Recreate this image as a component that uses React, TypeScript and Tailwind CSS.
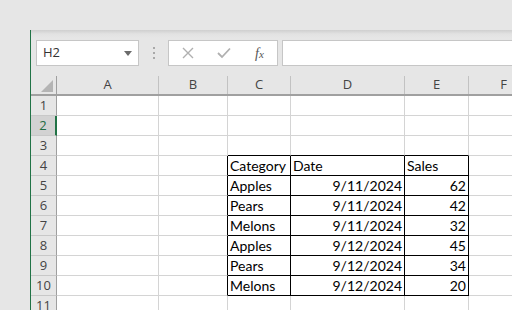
import React from "react";

type Col = { k: string; w: string };

const cols: Col[] = [
  { k: "A", w: "w-[102px]" },
  { k: "B", w: "w-[69px]" },
  { k: "C", w: "w-[63px]" },
  { k: "D", w: "w-[114px]" },
  { k: "E", w: "w-[64px]" },
  { k: "F", w: "w-[70px]" },
];

const data: Record<number, [string, string, string]> = {
  4: ["Category", "Date", "Sales"],
  5: ["Apples", "9/11/2024", "62"],
  6: ["Pears", "9/11/2024", "42"],
  7: ["Melons", "9/11/2024", "32"],
  8: ["Apples", "9/12/2024", "45"],
  9: ["Pears", "9/12/2024", "34"],
  10: ["Melons", "9/12/2024", "20"],
};

function Cell({ r, c }: { r: number; c: Col }) {
  const inTable = ["C", "D", "E"].includes(c.k);
  const rightBlack = (inTable || c.k === "B") && r >= 4 && r <= 10;
  const bottomBlack = inTable && r >= 3 && r <= 10;
  const rc = rightBlack ? "border-r-black" : "border-r-[#d4d4d4]";
  const bc = bottomBlack ? "border-b-black" : "border-b-[#d4d4d4]";
  let text = "";
  let right = false;
  if (data[r] && inTable) {
    const idx = c.k === "C" ? 0 : c.k === "D" ? 1 : 2;
    text = data[r][idx];
    right = r > 4 && idx > 0;
  }
  return (
    <div
      className={`${c.w} shrink-0 h-[20px] border-r border-b ${rc} ${bc} bg-white text-[14px] leading-[19px] text-black whitespace-nowrap overflow-visible ${
        right ? "text-right pr-[2px]" : "pl-[2px]"
      }`}
    >
      {text}
    </div>
  );
}

function RowHeader({ r }: { r: number }) {
  const sel = r === 2;
  return (
    <div
      className={`w-[26px] shrink-0 h-[20px] border-b border-b-[#c8c8c8] ${
        sel
          ? "bg-[#d2d2d2] text-[#1e6b41] border-r-2 border-r-[#217346]"
          : "bg-[#e6e6e6] text-[#444] border-r border-r-[#9f9f9f]"
      } flex items-center justify-center text-[13px] leading-none`}
      style={{ fontFamily: '"Open Sans", "Noto Sans", sans-serif' }}
    >
      {r}
    </div>
  );
}

export default function App() {
  const rows = Array.from({ length: 11 }, (_, i) => i + 1);
  return (
    <div
      className="w-[512px] h-[310px] bg-[#e6e6e6] overflow-hidden flex flex-col"
      style={{ fontFamily: 'Lato, "Open Sans", sans-serif' }}
    >
      <div className="h-[30px] shrink-0 bg-[#e6e6e6]" />
      <div className="flex flex-1 min-h-0">
        <div className="w-[30px] shrink-0 bg-[#e6e6e6]" />
        <div className="flex-1 min-w-0 border-l border-l-[#217346] flex flex-col overflow-hidden">
          {/* toolbar */}
          <div className="h-[46px] shrink-0 bg-[linear-gradient(#cfcfcf,#e2e2e2_4px,#e6e6e6_8px)] flex items-start pt-[10px] pl-[5px] overflow-hidden">
            <div className="w-[103px] shrink-0 h-[26px] bg-white border border-[#c6c6c6] flex items-center justify-between pl-[6px] pr-[6px]">
              <span
                className="text-[13px] text-[#333]"
                style={{ fontFamily: '"Open Sans", "Noto Sans", sans-serif' }}
              >
                H2
              </span>
              <svg width="8" height="5" viewBox="0 0 8 5">
                <path d="M0 0 L8 0 L4 5 Z" fill="#6b6b6b" />
              </svg>
            </div>
            <div className="w-[29px] shrink-0 h-[26px] flex flex-col items-center justify-center gap-[3px]">
              <div className="w-[2px] h-[2px] bg-[#a8a8a8]" />
              <div className="w-[2px] h-[2px] bg-[#a8a8a8]" />
              <div className="w-[2px] h-[2px] bg-[#a8a8a8]" />
            </div>
            <div className="w-[110px] shrink-0 h-[26px] bg-white border border-[#c6c6c6] flex items-center">
              <svg className="ml-[13px] shrink-0" width="12" height="12" viewBox="0 0 12 12">
                <path d="M1 1 L11 11 M11 1 L1 11" stroke="#b0b0b0" strokeWidth="1.4" />
              </svg>
              <svg className="ml-[23px] shrink-0" width="14" height="12" viewBox="0 0 14 12">
                <path d="M1 6 L5 10 L13 1.5" stroke="#b0b0b0" strokeWidth="1.8" fill="none" />
              </svg>
              <span
                className="ml-[24px] text-[14px] italic text-[#555]"
                style={{ fontFamily: '"Liberation Serif", serif' }}
              >
                f<span className="text-[11px]">x</span>
              </span>
            </div>
            <div className="ml-[4px] w-[260px] shrink-0 h-[26px] bg-white border border-[#c6c6c6]" />
          </div>
          {/* column headers */}
          <div className="h-[20px] shrink-0 flex bg-[#e6e6e6] border-b-2 border-b-[#a0a0a0]">
            <div className="w-[26px] shrink-0 border-r border-r-[#9f9f9f] flex items-end justify-end pr-[3px] pb-[2px]">
              <svg width="12" height="12" viewBox="0 0 12 12">
                <path d="M12 0 L12 12 L0 12 Z" fill="#b4b4b4" />
              </svg>
            </div>
            {cols.map((c) => (
              <div
                key={c.k}
                className={`${c.w} shrink-0 border-r border-r-[#c2c2c2] flex items-center justify-center text-[13px] text-[#444]`}
                style={{ fontFamily: '"Open Sans", "Noto Sans", sans-serif' }}
              >
                {c.k}
              </div>
            ))}
          </div>
          {/* rows */}
          {rows.map((r) => (
            <div key={r} className="flex shrink-0">
              <RowHeader r={r} />
              {cols.map((c) => (
                <Cell key={c.k} r={r} c={c} />
              ))}
            </div>
          ))}
        </div>
      </div>
    </div>
  );
}
